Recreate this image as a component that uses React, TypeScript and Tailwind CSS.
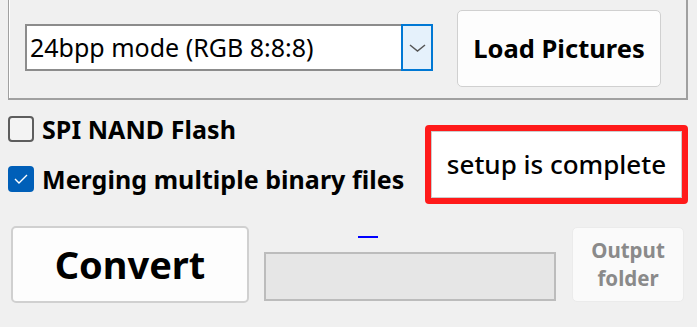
import React from 'react';

// Converter settings panel (Windows-style dialog)
const font = { fontFamily: '"Noto Sans", "Open Sans", sans-serif' };

const CheckBox = ({ checked, label }: { checked: boolean; label: string }) => (
  <div className="flex h-[26px] items-center">
    {checked ? (
      <div className="flex h-[26px] w-[26px] items-center justify-center rounded-[4px] bg-[#005fb8]">
        <svg width="14" height="10" viewBox="0 0 14 10" fill="none">
          <path d="M1 5 L5 9 L13 1" stroke="#ffffff" strokeWidth="1.4" />
        </svg>
      </div>
    ) : (
      <div className="h-[26px] w-[26px] rounded-[4px] border-2 border-[#5d5d5d] bg-[#f3f3f3]" />
    )}
    <span className="ml-[8px] text-[25px] font-bold leading-none tracking-[0.05px] text-black">{label}</span>
  </div>
);

export default function App() {
  return (
    <div className="flex h-[327px] w-[697px] flex-col overflow-hidden bg-[#f0f0f0]" style={font}>
      {/* group box, top edge is cut off */}
      <div className="ml-[8px] flex h-[100px] w-[680px] items-start border-b-2 border-l border-r-2 border-[#a0a0a0] pl-[16px] shadow-[inset_1px_0_0_#ffffff]">
        <div className="mt-[24px] flex h-[47px] w-[408px]">
          <div className="flex flex-1 items-center border-2 border-r-0 border-[#8c8c8c] bg-white pl-[3px] text-[25px] text-black">
            24bpp mode (RGB 8:8:8)
          </div>
          <div className="flex w-[32px] items-center justify-center border-2 border-[#0078d4] bg-[#e5f1fb]">
            <svg width="17" height="8" viewBox="0 0 17 8" fill="none">
              <path d="M1 1 L8.5 7 L16 1" stroke="#555555" strokeWidth="1.5" />
            </svg>
          </div>
        </div>
        <button className="ml-[24px] mt-[10px] h-[77px] w-[204px] rounded-[5px] border border-[#d0d0d0] bg-[#fdfdfd] text-[25.5px] font-bold text-black">
          Load Pictures
        </button>
      </div>

      {/* options row */}
      <div className="flex h-[126px] items-start">
        <div className="ml-[8px] mt-[16px] flex flex-col gap-[24px]">
          <CheckBox checked={false} label="SPI NAND Flash" />
          <CheckBox checked label="Merging multiple binary files" />
        </div>
        <div className="ml-auto mr-[9px] mt-[25px] h-[79px] w-[263px] rounded-[4px] border-[6px] border-[#ff1a1a]">
          <div className="flex h-full w-full items-center justify-center border border-[#cccccc] bg-white text-[26px] font-medium text-black">
            setup is complete
          </div>
        </div>
      </div>

      {/* action row */}
      <div className="flex items-start">
        <button className="ml-[11px] h-[77px] w-[238px] rounded-[5px] border-2 border-[#d0d0d0] bg-[#fdfdfd] text-[38px] font-bold text-black">
          Convert
        </button>
        <div className="ml-[15px] flex w-[292px] flex-col">
          <div className="ml-[94px] mt-[10px] h-[2px] w-[20px] bg-[#0000ff]" />
          <div className="mt-[14px] h-[49px] border-2 border-[#bcbcbc] bg-[#e6e6e6]" />
        </div>
        <button className="ml-[16px] mt-[1px] flex h-[75px] w-[112px] flex-col items-center justify-center gap-[7.5px] rounded-[5px] border border-[#ebebeb] bg-[#fafafa] text-[20.5px] font-bold leading-none text-[#8a8a8a]">
          <span>Output</span>
          <span>folder</span>
        </button>
      </div>
    </div>
  );
}
